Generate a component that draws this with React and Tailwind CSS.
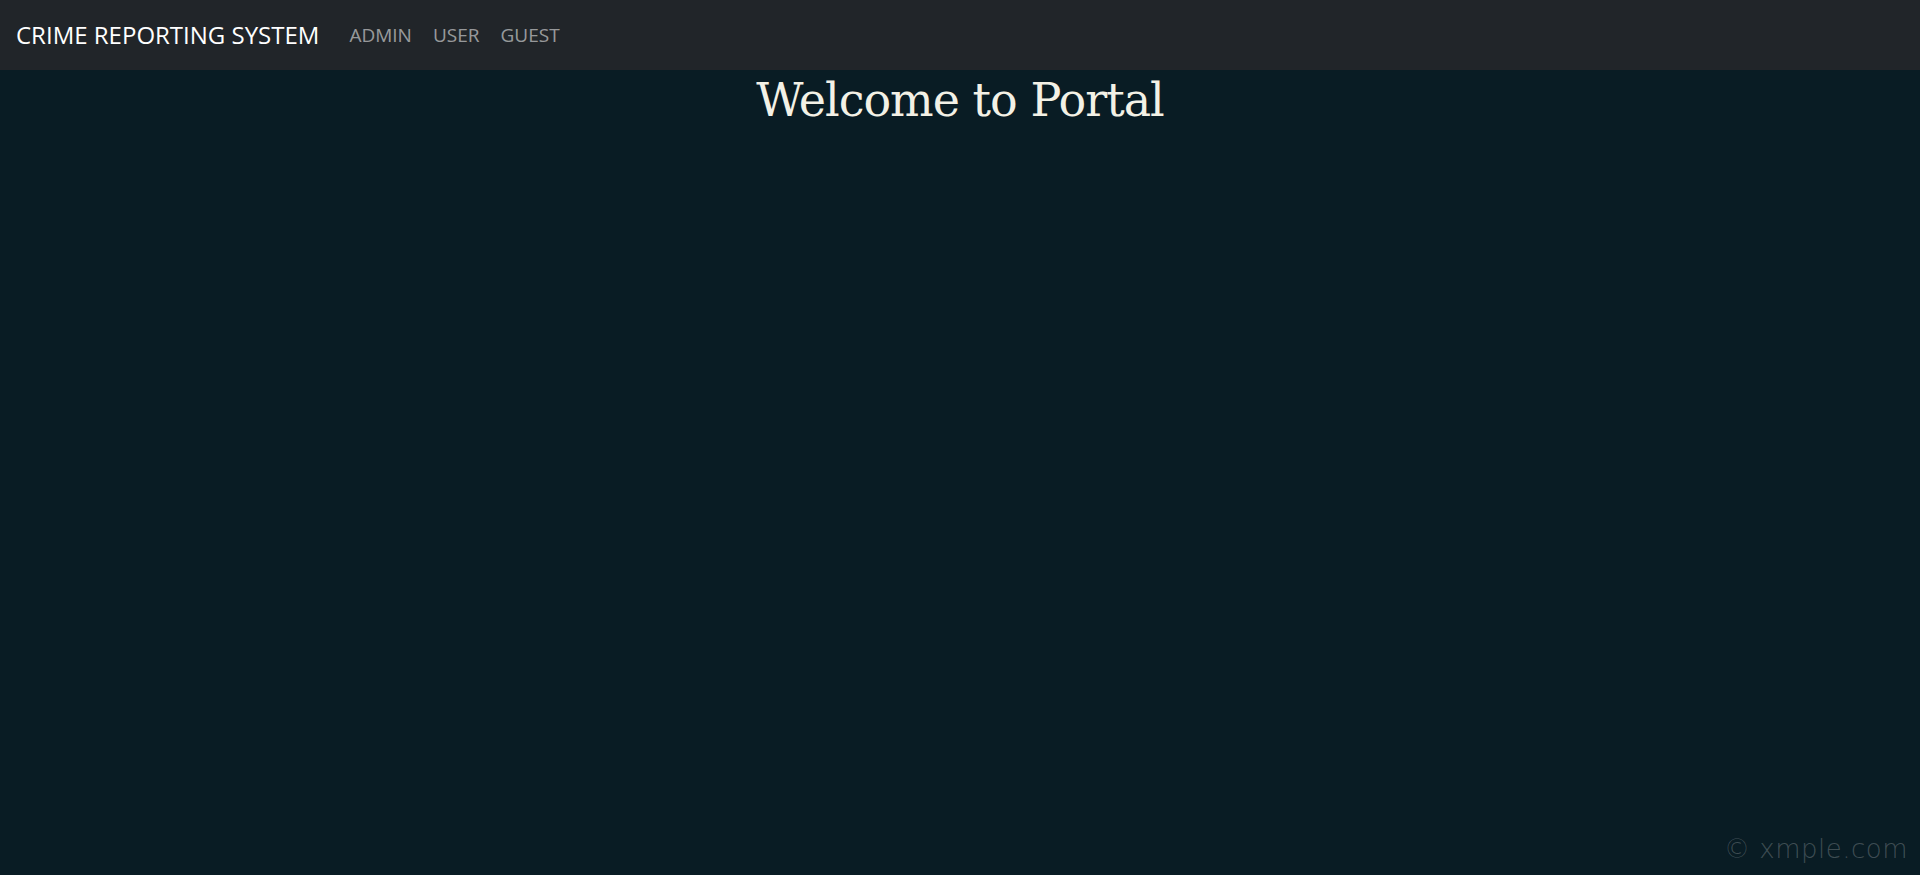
import React from 'react';

const links = ['ADMIN', 'USER', 'GUEST'];

const App = () => {
  return (
    <div className="min-h-screen h-[875px] bg-[#091c24] flex flex-col relative overflow-hidden">
      {/* Navbar */}
      <nav className="h-[70px] bg-[#212529] flex items-center pl-[16px] font-['Open_Sans',sans-serif]">
        <a className="text-[24px] text-white mr-[30px]">CRIME REPORTING SYSTEM</a>
        <div className="flex items-center gap-[21px]">
          {links.map(link => (
            <a key={link} className="text-[19px] text-[#ffffff8c]">{link}</a>
          ))}
        </div>
      </nav>

      <h1 className="text-center text-[46px] leading-[60px] text-[#f3f1e6] font-['DejaVu_Serif',serif] tracking-[-1px]">
        Welcome to Portal
      </h1>

      {/* watermark */}
      <div className="absolute right-[12px] bottom-[6px] text-[26px] text-[#ffffff38] font-['DejaVu_Sans',sans-serif] font-light tracking-[0.5px]">
        © xmple.com
      </div>
    </div>
  );
};

export default App;
